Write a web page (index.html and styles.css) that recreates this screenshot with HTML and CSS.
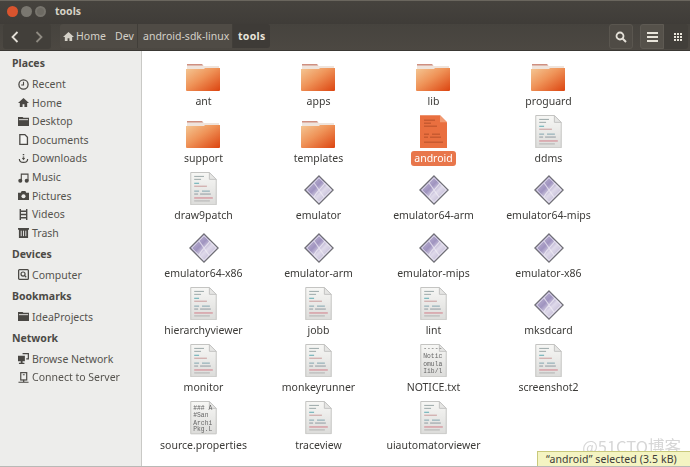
FILE: index.html
```html
<!DOCTYPE html>
<html lang="en">
<head>
<meta charset="utf-8">
<title>tools</title>
<link rel="stylesheet" href="styles.css">
</head>
<body>
<svg class="defs" width="0" height="0" aria-hidden="true">
  <defs>
    <linearGradient id="fold" x1="0" y1="0" x2="1" y2="1">
      <stop offset="0" stop-color="#f4c794"/><stop offset="0.45" stop-color="#ef9358"/><stop offset="1" stop-color="#dc4410"/>
    </linearGradient>
    <linearGradient id="paper" x1="0" y1="0" x2="0" y2="1">
      <stop offset="0" stop-color="#f7f7f5"/><stop offset="1" stop-color="#dcdcda"/>
    </linearGradient>
    <linearGradient id="dia" x1="0" y1="0" x2="1" y2="1">
      <stop offset="0" stop-color="#d6cfe4"/><stop offset="0.4" stop-color="#9f93bf"/><stop offset="0.58" stop-color="#dfdaea"/><stop offset="1" stop-color="#a99ec5"/>
    </linearGradient>
    <symbol id="i-folder" viewBox="0 0 34 27">
      <path d="M1 0h15l2 2h15v5H1z" fill="#efe4dc"/>
      <path d="M1 0h15l1 1.500H1z" fill="#cf8f80"/>
      <path d="M0 5h18l1-1h15v22a1 1 0 0 1-1 1H1a1 1 0 0 1-1-1z" fill="url(#fold)"/>
    </symbol>
    <symbol id="i-doc" viewBox="0 0 27 34">
      <path d="M.5.5h19l7 7v26H.5z" fill="url(#paper)" stroke="#c4c4c2"/>
      <path d="M19.500.5v7h7z" fill="#e6e6e4" stroke="#c4c4c2"/>
      <g stroke-width="1">
        <path d="M4 4.500h10M4 7.500h7" stroke="#9aa7a7"/>
        <path d="M4 11.500h5" stroke="#5ba8b0"/>
        <path d="M4 14.500h13" stroke="#c99a9a"/>
        <path d="M4 19.500h5M12 19.500h8" stroke="#7fa3ad"/>
        <path d="M4 22.500h4M10 22.500h11" stroke="#8f9a9f"/>
        <path d="M4 26.500h19" stroke="#d27a86"/>
        <path d="M4 29.500h16" stroke="#b0b0b0"/>
      </g>
    </symbol>
    <symbol id="i-orange" viewBox="0 0 27 33">
      <path d="M0 0h20l7 7v26H0z" fill="#e96f3f"/>
      <path d="M20 0v7h7z" fill="#f19a72"/>
      <path d="M4 5h11M4 8h7M4 11h13M4 19h5M12 19h8M4 22h4M10 22h11M4 27h19" stroke="#b6502a" stroke-width="1"/>
    </symbol>
    <symbol id="i-exe" viewBox="0 0 30 30">
      <path d="M15 .8 29.200 15 15 29.200.8 15z" fill="url(#dia)" stroke="#6c6c72" stroke-width="1.100"/>
      <path d="M15 2.800 27.200 15 15 27.200 2.800 15z" fill="none" stroke="#f0eff5" stroke-width=".7"/>
      <path d="M10 8c4 5 6 9 10 14M21 8c-3 5-8 8-11 14" fill="none" stroke="#f2eff7" stroke-width="1.200" opacity=".7"/>
    </symbol>
    <symbol id="s-home" viewBox="0 0 12 12"><path d="M6 1 0 6.500h2V11h3V8h2v3h3V6.500h2z"/></symbol>
    <symbol id="s-clock" viewBox="0 0 12 12"><circle cx="6" cy="6" r="5" fill="none" stroke="currentColor" stroke-width="1.400"/><path d="M6 3v3.500H3.500" fill="none" stroke="currentColor" stroke-width="1.200"/></symbol>
    <symbol id="s-folder" viewBox="0 0 12 12"><path d="M0 1h5l1 1h6v9H0z"/><path d="M1 4h10" stroke="#ededeb" stroke-width="1"/></symbol>
    <symbol id="s-doc" viewBox="0 0 12 12"><path d="M2 .7h5.500L10.300 3.500v7.800H2z" fill="#f4f4f2" stroke="currentColor" stroke-width="1.400"/></symbol>
    <symbol id="s-down" viewBox="0 0 12 12"><path d="M6 1v1.500M6 3.800v1.400" stroke="currentColor" stroke-width="1.600"/><path d="M4.200 5.500h3.600L6 8z"/><path d="M1.500 6.500c0 5 9 5 9 0" fill="none" stroke="currentColor" stroke-width="1.300"/></symbol>
    <symbol id="s-music" viewBox="0 0 12 12"><path d="M3 1.500h8.500v8h-1.200V3H4.200v6.500H3z"/><circle cx="2.500" cy="9.500" r="2.200"/><circle cx="9.500" cy="9.500" r="2.200"/></symbol>
    <symbol id="s-camera" viewBox="0 0 12 12"><path d="M0 3h3l1-2h4l1 2h3v8H0z"/><circle cx="6" cy="6.700" r="2.200" fill="#ededeb"/></symbol>
    <symbol id="s-film" viewBox="0 0 12 12"><path d="M2.500 0v12M9.500 0v12M2.500 2.500h7M2.500 6h7M2.500 9.500h7" fill="none" stroke="currentColor" stroke-width="1.500"/></symbol>
    <symbol id="s-trash" viewBox="0 0 12 12"><path d="M0 1h12v2h-1v9H1V3H0z"/><path d="M3.500 4v6M6 4v6M8.500 4v6" stroke="#ededeb"/></symbol>
    <symbol id="s-comp" viewBox="0 0 12 12"><rect x=".7" y=".7" width="10.600" height="10.600" rx="1" fill="none" stroke="currentColor" stroke-width="1.400"/><circle cx="5.500" cy="5.500" r="2.200" fill="none" stroke="currentColor" stroke-width="1.300"/><path d="m7 7 2 2" stroke="currentColor" stroke-width="1.300"/></symbol>
    <symbol id="s-net" viewBox="0 0 12 12"><path d="M0 3h7.500v6H5v1.500h2V12H1v-1.500h2V9H0z"/><path d="M5 .7h6.300v5.800H9" fill="none" stroke="currentColor" stroke-width="1.300"/></symbol>
    <symbol id="s-srv" viewBox="0 0 12 12"><rect x="3" y=".7" width="6.500" height="8" fill="none" stroke="currentColor" stroke-width="1.300"/><path d="M5.300 3h2M6.200 8.500v2M.5 11.200h11" stroke="currentColor" stroke-width="1.300" fill="none"/></symbol>
    <symbol id="i-search" viewBox="0 0 12 12"><circle cx="5" cy="5" r="3.500" fill="none" stroke="currentColor" stroke-width="1.800"/><path d="m7.500 7.500 3.500 3.500" stroke="currentColor" stroke-width="2"/></symbol>
  </defs>
</svg>

<div class="window">
  <header class="titlebar">
    <div class="winbtns">
      <span class="winbtn close"></span>
      <span class="winbtn min"></span>
      <span class="winbtn max"></span>
    </div>
    <span class="wintitle">tools</span>
  </header>

  <nav class="toolbar">
    <div class="navbtns">
      <span class="tbtn back"><svg class="chev" viewBox="0 0 8 12"><path d="M6.500 1 1.500 6l5 5" fill="none" stroke="currentColor" stroke-width="1.800"/></svg></span>
      <span class="tbtn fwd"><svg class="chev" viewBox="0 0 8 12"><path d="m1.500 1 5 5-5 5" fill="none" stroke="currentColor" stroke-width="1.800"/></svg></span>
    </div>
    <div class="crumbs">
      <span class="crumb c-home"><svg class="crumb-ico"><use href="#s-home"/></svg>Home</span>
      <span class="crumb c-dev">Dev</span>
      <span class="crumb c-sdk">android-sdk-linux</span>
      <span class="crumb current">tools</span>
    </div>
    <div class="tools">
      <span class="tbtn tool-search"><svg class="tool-ico"><use href="#i-search"/></svg></span>
      <div class="viewbtns">
        <span class="tbtn view-list"><span class="lines"><i></i><i></i><i></i></span></span>
        <span class="tbtn view-grid"><span class="dots"><i></i><i></i><i></i><i></i><i></i><i></i><i></i><i></i><i></i></span></span>
      </div>
    </div>
  </nav>

  <div class="body">
    <aside class="sidebar">
      <h2 class="sb-head">Places</h2>
      <a class="sb-item"><svg class="sb-ico"><use href="#s-clock"/></svg>Recent</a>
      <a class="sb-item"><svg class="sb-ico"><use href="#s-home"/></svg>Home</a>
      <a class="sb-item"><svg class="sb-ico"><use href="#s-folder"/></svg>Desktop</a>
      <a class="sb-item"><svg class="sb-ico"><use href="#s-doc"/></svg>Documents</a>
      <a class="sb-item"><svg class="sb-ico"><use href="#s-down"/></svg>Downloads</a>
      <a class="sb-item"><svg class="sb-ico"><use href="#s-music"/></svg>Music</a>
      <a class="sb-item"><svg class="sb-ico"><use href="#s-camera"/></svg>Pictures</a>
      <a class="sb-item"><svg class="sb-ico"><use href="#s-film"/></svg>Videos</a>
      <a class="sb-item"><svg class="sb-ico"><use href="#s-trash"/></svg>Trash</a>
      <h2 class="sb-head">Devices</h2>
      <a class="sb-item"><svg class="sb-ico"><use href="#s-comp"/></svg>Computer</a>
      <h2 class="sb-head">Bookmarks</h2>
      <a class="sb-item"><svg class="sb-ico"><use href="#s-folder"/></svg>IdeaProjects</a>
      <h2 class="sb-head">Network</h2>
      <a class="sb-item"><svg class="sb-ico"><use href="#s-net"/></svg>Browse Network</a>
      <a class="sb-item"><svg class="sb-ico"><use href="#s-srv"/></svg>Connect to Server</a>
    </aside>

    <main class="files">
      <div class="file"><svg class="ic-folder"><use href="#i-folder"/></svg><span class="name">ant</span></div>
      <div class="file"><svg class="ic-folder"><use href="#i-folder"/></svg><span class="name">apps</span></div>
      <div class="file"><svg class="ic-folder"><use href="#i-folder"/></svg><span class="name">lib</span></div>
      <div class="file"><svg class="ic-folder"><use href="#i-folder"/></svg><span class="name">proguard</span></div>

      <div class="file"><svg class="ic-folder"><use href="#i-folder"/></svg><span class="name">support</span></div>
      <div class="file"><svg class="ic-folder"><use href="#i-folder"/></svg><span class="name">templates</span></div>
      <div class="file"><svg class="ic-doc"><use href="#i-orange"/></svg><span class="name selected">android</span></div>
      <div class="file"><svg class="ic-doc"><use href="#i-doc"/></svg><span class="name">ddms</span></div>

      <div class="file"><svg class="ic-doc"><use href="#i-doc"/></svg><span class="name">draw9patch</span></div>
      <div class="file"><svg class="ic-exe"><use href="#i-exe"/></svg><span class="name">emulator</span></div>
      <div class="file"><svg class="ic-exe"><use href="#i-exe"/></svg><span class="name">emulator64-arm</span></div>
      <div class="file"><svg class="ic-exe"><use href="#i-exe"/></svg><span class="name">emulator64-mips</span></div>

      <div class="file"><svg class="ic-exe"><use href="#i-exe"/></svg><span class="name">emulator64-x86</span></div>
      <div class="file"><svg class="ic-exe"><use href="#i-exe"/></svg><span class="name">emulator-arm</span></div>
      <div class="file"><svg class="ic-exe"><use href="#i-exe"/></svg><span class="name">emulator-mips</span></div>
      <div class="file"><svg class="ic-exe"><use href="#i-exe"/></svg><span class="name">emulator-x86</span></div>

      <div class="file"><svg class="ic-doc"><use href="#i-doc"/></svg><span class="name">hierarchyviewer</span></div>
      <div class="file"><svg class="ic-doc"><use href="#i-doc"/></svg><span class="name">jobb</span></div>
      <div class="file"><svg class="ic-doc"><use href="#i-doc"/></svg><span class="name">lint</span></div>
      <div class="file"><svg class="ic-exe"><use href="#i-exe"/></svg><span class="name">mksdcard</span></div>

      <div class="file"><svg class="ic-doc"><use href="#i-doc"/></svg><span class="name">monitor</span></div>
      <div class="file"><svg class="ic-doc"><use href="#i-doc"/></svg><span class="name">monkeyrunner</span></div>
      <div class="file"><svg class="ic-doc" viewBox="0 0 27 34"><path d="M.5.5h19l7 7v26H.5z" fill="url(#paper)" stroke="#c4c4c2"/><path d="M19.500.5v7h7z" fill="#e6e6e4" stroke="#c4c4c2"/><text class="thumb" x="3" y="6">-----</text><text class="thumb" x="3" y="14">Notic</text><text class="thumb" x="3" y="22">omula</text><text class="thumb" x="3" y="30">Iib/l</text></svg><span class="name">NOTICE.txt</span></div>
      <div class="file"><svg class="ic-doc"><use href="#i-doc"/></svg><span class="name">screenshot2</span></div>

      <div class="file"><svg class="ic-doc" viewBox="0 0 27 34"><path d="M.5.5h19l7 7v26H.5z" fill="url(#paper)" stroke="#c4c4c2"/><path d="M19.500.5v7h7z" fill="#e6e6e4" stroke="#c4c4c2"/><text class="thumb" x="3" y="9">### A</text><text class="thumb" x="3" y="16">#San</text><text class="thumb" x="3" y="24">Archi</text><text class="thumb" x="3" y="31">Pkg.L</text></svg><span class="name">source.properties</span></div>
      <div class="file"><svg class="ic-doc"><use href="#i-doc"/></svg><span class="name">traceview</span></div>
      <div class="file"><svg class="ic-doc"><use href="#i-doc"/></svg><span class="name">uiautomatorviewer</span></div>
    </main>
  </div>

  <div class="watermark">@51CTO博客</div>
  <div class="status">“android” selected (3.5 kB)</div>
</div>
</body>
</html>
```

FILE: styles.css
```css
* { box-sizing: border-box; }
html, body { margin: 0; padding: 0; }
body { width: 690px; height: 467px; overflow: hidden; background: #fff; font-family: "Noto Sans", "Open Sans", sans-serif; }
.defs { position: absolute; }

.window { position: relative; width: 690px; height: 467px; display: flex; flex-direction: column; filter: blur(.4px); }

.titlebar { height: 24px; flex: none; display: flex; align-items: center; padding: 0 0 3px 7px; background: linear-gradient(#46433e, #3f3c38); border-top: 1px solid #6a665e; }
.winbtns { display: flex; gap: 3px; }
.winbtn { width: 11px; height: 11px; border-radius: 50%; }
.close { background: #d9542e; }
.min { background: #7a7770; }
.max { background: #6d6a63; border: 2px solid #77746d; }
.wintitle { margin-left: 9px; font-size: 10.5px; font-weight: 700; color: #d6d2c6; }

.toolbar { height: 27px; flex: none; display: flex; align-items: flex-start; padding-left: 3px; background: linear-gradient(#46433e, #4c4842); border-bottom: 1px solid #3a3834; }
.navbtns { display: flex; width: 48px; height: 25px; background: #423f3a; border-radius: 3px; }
.tbtn { display: flex; align-items: center; justify-content: center; height: 25px; width: 24px; }
.chev { width: 8px; height: 12px; }
.back { color: #e4e0d8; }
.fwd { color: #8f8b82; }

.crumbs { display: flex; height: 24px; margin-left: 9px; font-size: 10.5px; color: #d5d1c8; border-radius: 3px; }
.crumb { display: flex; align-items: center; height: 24px; border-right: 1px solid #413e39; }
.c-home { width: 55px; padding-left: 3px; gap: 2px; background: #4f4b45; border-radius: 3px 0 0 3px; border-right: 0; }
.c-dev { width: 23px; background: #4f4b45; }
.c-sdk { width: 95px; padding-left: 5px; background: #4f4b45; }
.current { width: 37px; padding-left: 5px; font-weight: 700; letter-spacing: .3px; color: #e8e4da; background: #3e3b37; border-right: 0; border-radius: 0 3px 3px 0; }
.crumb-ico { width: 11px; height: 11px; fill: #d5d1c8; flex: none; }

.tools { margin-left: auto; display: flex; gap: 7px; padding-right: 2px; }
.tool-search { background: #4f4b45; border: 1px solid #5a564f; border-radius: 3px; color: #e4e0d8; }
.tool-ico { width: 12px; height: 12px; }
.viewbtns { display: flex; }
.view-list { background: #55514a; border: 1px solid #5e5a53; border-radius: 3px 0 0 3px; }
.view-grid { padding-left: 4px; background: #423f3a; border-radius: 0 3px 3px 0; }
.lines { display: grid; gap: 2px; width: 11px; }
.lines i { display: block; height: 2px; background: #e8e4da; }
.dots { display: grid; grid-template-columns: repeat(3, 2px); gap: 1px; }
.dots i { display: block; width: 2px; height: 2px; background: #e8e4da; }

.body { flex: 1; min-height: 0; display: flex; border-bottom: 1px solid #b9b9b6; }

.sidebar { width: 142px; flex: none; display: flex; flex-direction: column; padding-top: .4px; background: #ededeb; border-right: 1px solid #c9c9c6; color: #55534e; font-size: 10.5px; }
.sb-head { margin: 0; height: 23.4px; display: flex; align-items: center; padding-left: 12px; font-size: 10.5px; font-weight: 700; color: #4c4a46; }
.sb-item { height: 18.6px; display: flex; align-items: center; padding-left: 18px; gap: 3px; }
.sb-ico { width: 11px; height: 11px; flex: none; fill: #4a4844; color: #4a4844; }

.files { flex: 1; display: grid; grid-template-columns: repeat(4, 115px); grid-auto-rows: 57.33px; align-content: start; padding: 6.5px 0 0 4px; font-size: 10.5px; color: #3c3b38; }
.file { display: flex; flex-direction: column; align-items: center; justify-content: flex-end; padding-bottom: 6px; position: relative; }
.ic-folder { width: 34px; height: 27px; margin-bottom: 3px; margin-right: 1px; }
.ic-doc { width: 27px; height: 34px; margin-bottom: 3px; }
.ic-exe { width: 30px; height: 30px; margin-bottom: 3px; }
.name { line-height: 15px; padding: 0 3px; white-space: nowrap; border-radius: 3px; }
.selected { background: #e8764b; color: #fff; }
.thumb { font-family: "Liberation Mono", monospace; font-size: 6.500px; fill: #666; }

.watermark { position: absolute; right: 9px; bottom: 15px; line-height: 12px; font-family: "Noto Sans CJK SC", "Noto Sans", sans-serif; font-size: 16.5px; color: #c9c9c9; opacity: .75; }
.status { position: absolute; right: 0; bottom: 1px; width: 153px; height: 15px; display: flex; align-items: center; padding-left: 8px; background: #f4f4c2; border: 1px solid #c9c97c; border-width: 1px 0 0 1px; font-size: 10.5px; letter-spacing: .1px; color: #3c3b38; white-space: nowrap; }
```
